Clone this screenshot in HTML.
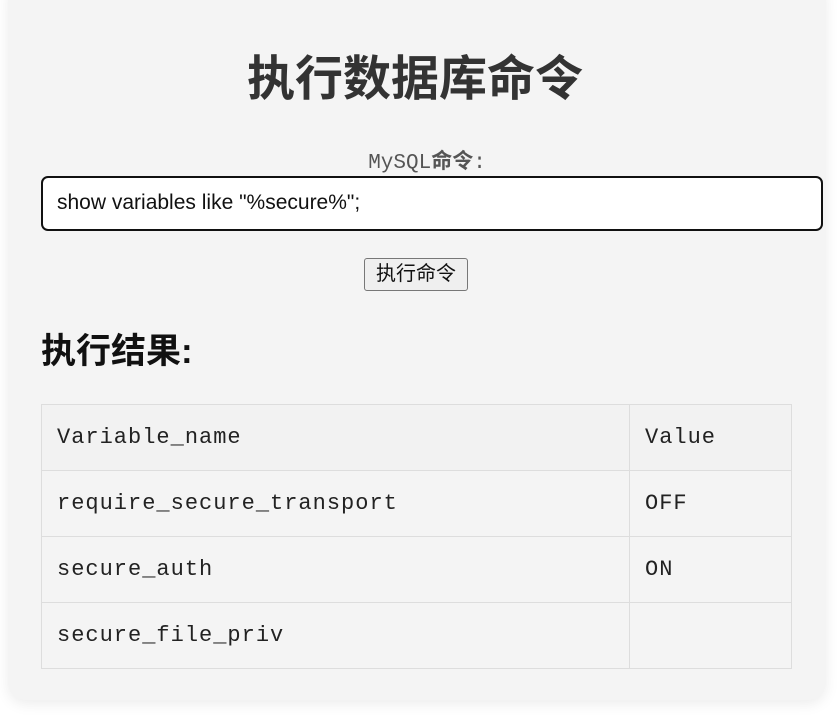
<!DOCTYPE html>
<html><head><meta charset="utf-8"><style>
body{margin:0;background:#fff;width:839px;height:715px;overflow:hidden;font-family:"Liberation Sans","Noto Sans CJK SC",sans-serif;}
.c{position:absolute;left:8px;top:-20px;width:818px;height:720px;background:#f4f4f4;border-radius:18px;box-shadow:0 4px 14px rgba(0,0,0,0.08);}
h1{position:absolute;left:0;width:830px;top:50px;margin:0;text-align:center;font-size:48px;line-height:60px;color:#333;font-weight:bold;}
.lab{position:absolute;left:0;width:854px;top:146px;text-align:center;font-family:"Liberation Mono","Noto Sans CJK SC",monospace;font-size:21px;color:#555;line-height:28px;}
.lab b{font-family:"Noto Sans CJK SC",sans-serif;}
.in{position:absolute;left:41px;top:176px;width:778px;height:51px;border:2px solid #111;border-radius:7px;background:#fff;box-sizing:content-box;}
.in span{position:absolute;left:14px;top:13px;font-size:21px;color:#111;}
.btn{position:absolute;left:364px;top:258px;width:102px;height:31px;border:1px solid #777;border-radius:3px;background:#efefef;font-size:20px;text-align:center;line-height:31px;color:#111;}
h2{position:absolute;left:41px;top:330px;margin:0;font-size:35px;line-height:44px;color:#111;}
table{position:absolute;left:41px;top:404px;width:751px;border-collapse:collapse;font-family:"Liberation Mono",monospace;font-size:22px;letter-spacing:1px;color:#222;}
td{border:1px solid #ddd;height:66px;padding:0 0 0 15px;box-sizing:border-box;}
tr:first-child td{background:#f2f2f2;}
</style></head><body>
<div class="c"></div>
<h1>执行数据库命令</h1>
<div class="lab">MySQL<b>命令</b>:</div>
<div class="in"><span>show variables like "%secure%";</span></div>
<div class="btn">执行命令</div>
<h2>执行结果:</h2>
<table>
<tr><td style="width:588px">Variable_name</td><td>Value</td></tr>
<tr><td>require_secure_transport</td><td>OFF</td></tr>
<tr><td>secure_auth</td><td>ON</td></tr>
<tr><td>secure_file_priv</td><td></td></tr>
</table>
</body></html>
